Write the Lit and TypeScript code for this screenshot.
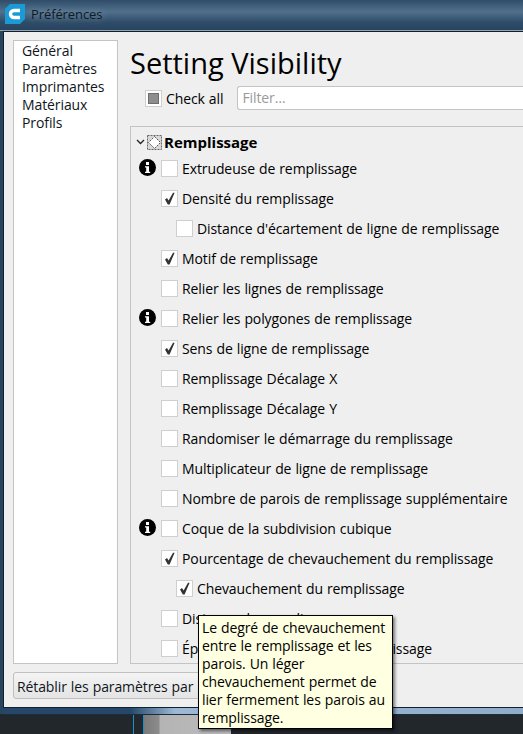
import { LitElement, html, css } from 'lit';
import { customElement } from 'lit/decorators.js';

const navItems = ['Général', 'Paramètres', 'Imprimantes', 'Matériaux', 'Profils'];

type Row = { label: string; checked?: boolean; info?: boolean; child?: boolean };

const rows: Row[] = [
  { label: 'Extrudeuse de remplissage', info: true },
  { label: 'Densité du remplissage', checked: true },
  { label: "Distance d'écartement de ligne de remplissage", child: true },
  { label: 'Motif de remplissage', checked: true },
  { label: 'Relier les lignes de remplissage' },
  { label: 'Relier les polygones de remplissage', info: true },
  { label: 'Sens de ligne de remplissage', checked: true },
  { label: 'Remplissage Décalage X' },
  { label: 'Remplissage Décalage Y' },
  { label: 'Randomiser le démarrage du remplissage' },
  { label: 'Multiplicateur de ligne de remplissage' },
  { label: 'Nombre de parois de remplissage supplémentaire' },
  { label: 'Coque de la subdivision cubique', info: true },
  { label: 'Pourcentage de chevauchement du remplissage', checked: true },
  { label: 'Chevauchement du remplissage', checked: true, child: true },
  { label: 'Distance de remplissage' },
  { label: 'Épaisseur de la couche de remplissage' },
];

@customElement('app-root')
export class AppRoot extends LitElement {
  static styles = css`
    :host {
      display: block;
      position: relative;
      width: 523px;
      height: 734px;
      overflow: hidden;
      background: #22272b;
      font-family: 'Open Sans', 'Noto Sans', sans-serif;
      font-size: 14px;
      letter-spacing: -0.1px;
      word-spacing: 0.5px;
      color: #000;
    }
    .titlebar {
      height: 31px;
      display: flex;
      align-items: center;
      gap: 6px;
      padding: 0 0 3px 5px;
      box-sizing: border-box;
      background: linear-gradient(#2f4d69 0, #51708c 38%, #2e4c68 72%, #27455f 97%, #8fa3b5 97%);
      color: #0f1a24;
      font-size: 13px;
      text-shadow: 0 0 8px rgba(255, 255, 255, 0.4);
    }
    .titlebar svg { display: block; }
    .frame {
      height: 684px;
      box-sizing: border-box;
      background: linear-gradient(90deg, #24476a 0, #24476a 130px, #9cb8d4 175px, #8fadc9 100%);
      padding: 0 0 6px 3px;
      border-bottom: 1px solid #1c2c3a;
      position: relative;
    }
    .frame::before {
      content: '';
      position: absolute;
      left: 0;
      top: 0;
      width: 3px;
      height: 100%;
      background: #27455f;
    }
    .window {
      height: 677px;
      box-sizing: border-box;
      position: relative;
      border: 1px solid #14202c;
      border-right: none;
      background: #efefef;
      padding: 8px 0 0 9px;
      display: flex;
      flex-direction: column;
      gap: 8px;
    }
    .main { display: flex; gap: 12px; height: 624px; }
    .nav {
      width: 105px;
      flex: none;
      box-sizing: border-box;
      background: #fff;
      border: 1px solid #c4c4c4;
      padding: 1px 0 0 8px;
      line-height: 18px;
      color: #10161c;
    }
    .content { flex: 1; min-width: 0; display: flex; flex-direction: column; }
    h1 {
      margin: 0;
      padding-top: 3px;
      font-weight: 400;
      font-size: 29px;
      line-height: 40px;
      white-space: nowrap;
      letter-spacing: 0;
      word-spacing: 0;
    }
    .tools {
      display: flex;
      align-items: center;
      gap: 4px;
      height: 26px;
      margin: 2px 0 0 15px;
    }
    .filter {
      margin-left: 10px;
      flex: 1;
      height: 24px;
      box-sizing: border-box;
      background: #fff;
      border: 1px solid #c4c4c4;
      border-right: none;
      border-radius: 3px 0 0 3px;
      padding-left: 4px;
      line-height: 22px;
      color: #9a9a9a;
    }
    .panel {
      margin-top: 15px;
      height: 538px;
      box-sizing: border-box;
      border: 1px solid #c4c4c4;
      border-right: none;
      padding-top: 4px;
    }
    .group {
      display: flex;
      align-items: center;
      height: 22px;
      padding-left: 5px;
      gap: 2px;
      font-weight: 700;
      font-size: 15px;
      letter-spacing: 0;
    }
    .row {
      display: flex;
      align-items: center;
      height: 30px;
      padding-left: 30px;
      gap: 4px;
      position: relative;
      white-space: nowrap;
    }
    .row.child { padding-left: 45px; }
    .info { position: absolute; left: 8px; top: 6px; }
    .box {
      width: 17px;
      height: 17px;
      flex: none;
      box-sizing: border-box;
      background: #fff;
      border: 1px solid #cfcfcf;
      display: flex;
      align-items: center;
      justify-content: center;
    }
    .box.partial::after {
      content: '';
      width: 9px;
      height: 9px;
      background: #8e8e8e;
      border: 1px solid #6d6d6d;
    }
    .reset {
      width: 300px;
      height: 27px;
      box-sizing: border-box;
      border: 1px solid #c0c0c0;
      border-radius: 3px;
      background: linear-gradient(#f4f4f4, #e4e4e4);
      padding-left: 3px;
      line-height: 27px;
      color: #10161c;
      white-space: nowrap;
      overflow: hidden;
    }
    .desktop { position: relative; height: 19px; }
    .desktop .patch {
      position: absolute;
      left: 144px;
      top: 0;
      width: 87px;
      height: 19px;
      background: linear-gradient(90deg, #7a7a7a 0, #8c8c8c 15px, #b4b4b4 16px, #bcbcbc 100%);
    }
    .desktop .line { position: absolute; top: 0; width: 1px; height: 19px; background: #1b8fd0; }
    .tooltip {
      position: absolute;
      left: 198px;
      top: 615px;
      width: 195px;
      height: 114px;
      box-sizing: border-box;
      background: #ffffe1;
      border: 1px solid #000;
      box-shadow: 2px 2px 3px rgba(0, 0, 0, 0.5);
      padding: 3px 0 0 3px;
      line-height: 18px;
      white-space: pre-line;
    }
  `;

  check() {
    return html`<svg width="13" height="13" viewBox="0 0 13 13"><path d="M2 7.5L4 6l1.6 2.6L10 .8h1.6L6.6 12.5H4.8z" fill="#333"/></svg>`;
  }

  info() {
    return html`<svg class="info" width="17" height="17" viewBox="0 0 17 17">
      <circle cx="8.5" cy="8.5" r="8.5" fill="#000"/>
      <rect x="7" y="3" width="3" height="3" fill="#fff"/>
      <path d="M6 7.2h4v5.6h1.2V14H6v-1.2h1.2V8.4H6z" fill="#fff"/>
    </svg>`;
  }

  render() {
    return html`
      <div class="titlebar">
        <svg width="20" height="20" viewBox="0 0 20 20">
          <path d="M5 0H20V15L15 20H0V5z" fill="#1a9ad6"/>
          <path d="M15 6.5H9A3.2 3.2 0 0 0 9 13.5H15" fill="none" stroke="#fff" stroke-width="3.4"/>
        </svg>
        <span>Préférences</span>
      </div>
      <div class="frame">
        <div class="window">
          <div class="main">
            <div class="nav">${navItems.map((n) => html`<div>${n}</div>`)}</div>
            <div class="content">
              <h1>Setting Visibility</h1>
              <div class="tools">
                <div class="box partial"></div>
                <span>Check all</span>
                <div class="filter">Filter…</div>
              </div>
              <div class="panel">
                <div class="group">
                  <svg width="9" height="6" viewBox="0 0 9 6"><path d="M1 1l3.5 3.5L8 1" fill="none" stroke="#222" stroke-width="1.3"/></svg>
                  <svg width="15" height="15" viewBox="0 0 15 15">
                    <rect x=".5" y=".5" width="14" height="14" fill="#d8d8d8" stroke="#666" stroke-dasharray="2 1"/>
                    <path d="M7.5 1.5L13.5 7.5L7.5 13.5L1.5 7.5z" fill="#fff" stroke="#555" stroke-dasharray="2 1"/>
                  </svg>
                  <span>Remplissage</span>
                </div>
                ${rows.map(
                  (r) => html`
                    <div class="row ${r.child ? 'child' : ''}">
                      ${r.info ? this.info() : ''}
                      <div class="box">${r.checked ? this.check() : ''}</div>
                      <span>${r.label}</span>
                    </div>
                  `
                )}
              </div>
            </div>
          </div>
          <div class="reset">Rétablir les paramètres par défaut</div>
        </div>
      </div>
      <div class="desktop">
        <div class="line" style="left:133px"></div>
        <div class="line" style="left:143px"></div>
        <div class="patch"></div>
      </div>
      <div class="tooltip">Le degré de chevauchement
entre le remplissage et les
parois. Un léger
chevauchement permet de
lier fermement les parois au
remplissage.</div>
    `;
  }
}
